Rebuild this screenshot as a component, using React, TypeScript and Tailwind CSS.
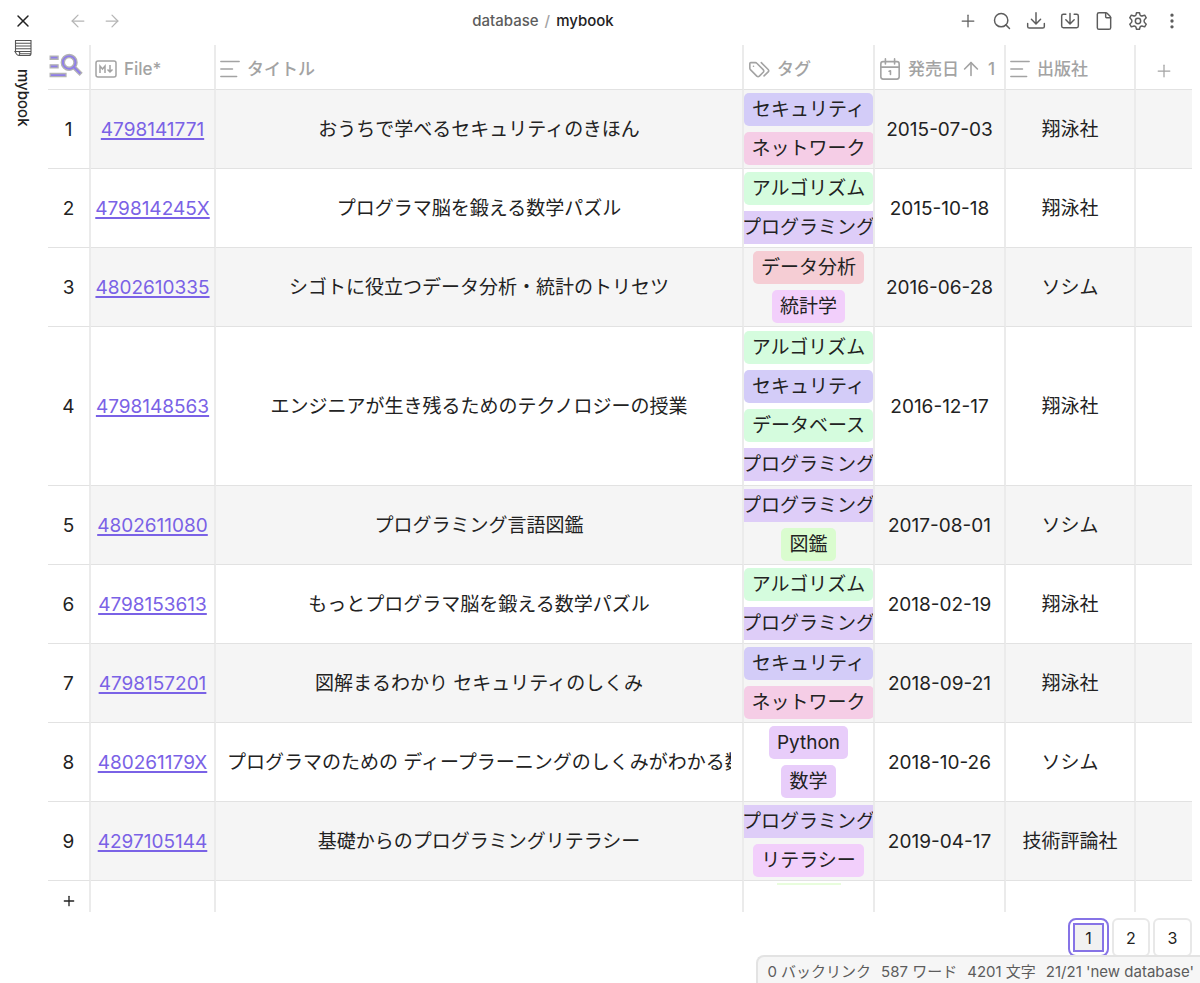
import * as React from "react";
import { ArrowLeft, ArrowRight, ArrowUp, EllipsisVertical, File, Plus, Search, X } from "lucide-react";

const tagColors: Record<string, string> = {
  セキュリティ: "bg-[#d3ccf8]",
  ネットワーク: "bg-[#f5cde6]",
  アルゴリズム: "bg-[#d5fcde]",
  プログラミング: "bg-[#decdf8]",
  データ分析: "bg-[#f5cdd4]",
  統計学: "bg-[#f2cffb]",
  データベース: "bg-[#d5fcde]",
  図鑑: "bg-[#dafccf]",
  Python: "bg-[#e8cdfa]",
  数学: "bg-[#e8cdfa]",
  リテラシー: "bg-[#f2cffb]",
};

const books = [
  { file: "4798141771", title: "おうちで学べるセキュリティのきほん", tags: ["セキュリティ", "ネットワーク"], date: "2015-07-03", publisher: "翔泳社" },
  { file: "479814245X", title: "プログラマ脳を鍛える数学パズル", tags: ["アルゴリズム", "プログラミング"], date: "2015-10-18", publisher: "翔泳社" },
  { file: "4802610335", title: "シゴトに役立つデータ分析・統計のトリセツ", tags: ["データ分析", "統計学"], date: "2016-06-28", publisher: "ソシム" },
  { file: "4798148563", title: "エンジニアが生き残るためのテクノロジーの授業", tags: ["アルゴリズム", "セキュリティ", "データベース", "プログラミング"], date: "2016-12-17", publisher: "翔泳社" },
  { file: "4802611080", title: "プログラミング言語図鑑", tags: ["プログラミング", "図鑑"], date: "2017-08-01", publisher: "ソシム" },
  { file: "4798153613", title: "もっとプログラマ脳を鍛える数学パズル", tags: ["アルゴリズム", "プログラミング"], date: "2018-02-19", publisher: "翔泳社" },
  { file: "4798157201", title: "図解まるわかり セキュリティのしくみ", tags: ["セキュリティ", "ネットワーク"], date: "2018-09-21", publisher: "翔泳社" },
  { file: "480261179X", title: "プログラマのための ディープラーニングのしくみがわかる数学入門", tags: ["Python", "数学"], date: "2018-10-26", publisher: "ソシム" },
  { file: "4297105144", title: "基礎からのプログラミングリテラシー", tags: ["プログラミング", "リテラシー"], date: "2019-04-17", publisher: "技術評論社" },
];

type IconProps = { children: React.ReactNode; className?: string };

function Icon({ children, className = "size-5" }: IconProps) {
  return (
    <svg
      viewBox="0 0 24 24"
      fill="none"
      stroke="currentColor"
      strokeWidth={1.75}
      strokeLinecap="round"
      strokeLinejoin="round"
      aria-hidden="true"
      className={`shrink-0 ${className}`}
    >
      {children}
    </svg>
  );
}

function DownloadIcon() {
  return (
    <Icon>
      <path d="M12 2v13M6.500 10 12 15.500 17.500 10M2 15v3.500a2 2 0 0 0 2 2h16a2 2 0 0 0 2-2V15" />
    </Icon>
  );
}

function ImportIcon() {
  return (
    <Icon>
      <path d="M12 3v12M7 10.500 12 15.500l5-5M7 4H4a2 2 0 0 0-2 2v12a2 2 0 0 0 2 2h16a2 2 0 0 0 2-2V6a2 2 0 0 0-2-2h-3" />
    </Icon>
  );
}

function GearIcon() {
  return (
    <Icon>
      <path d="M9.700 4.200 10.200 2h3.600l.500 2.200q.400 1.300 1.300 1.500.900.500 2.200 0l2.200-.700 1.900 3.200-1.700 1.600q-.900.900-.900 2.200t.900 2.200l1.700 1.600-1.900 3.200-2.200-.700q-1.300-.500-2.200 0-.900.300-1.300 1.500l-.500 2.200h-3.600l-.500-2.200q-.400-1.300-1.300-1.500-.900-.500-2.200 0L4 19l-1.900-3.200 1.700-1.600q.900-.900.900-2.200t-.900-2.200L2.100 8.200 4 5l2.200.700q1.300.500 2.200 0 .900-.200 1.300-1.500Z" />
      <circle cx="12" cy="12" r="3.200" />
    </Icon>
  );
}

function TextIcon() {
  return (
    <Icon>
      <path d="M1 3h22M1 12h14M1 21h19" />
    </Icon>
  );
}

function TagsIcon() {
  return (
    <Icon className="size-[22px]">
      <path d="M2 6v5.200q0 .900.600 1.500l7 7q1.400 1.200 2.800 0l4.200-4.200q1.200-1.400 0-2.800l-7-7Q9 5 8 5H3Q2 5 2 6Z" />
      <path d="m17.500 19.500 4.500-4.300q1.200-1.300 0-2.700L14.500 5M6 9h.010" />
    </Icon>
  );
}

function CalendarIcon() {
  return (
    <Icon className="size-[22px]">
      <rect x="2" y="4" width="20" height="19" rx="2.500" />
      <path d="M7 1v5.500M17 1v5.500M2 10h20M11 14.500l1.500-.500v4" />
    </Icon>
  );
}

function MarkdownIcon() {
  return (
    <svg viewBox="0 0 22 18" fill="none" stroke="currentColor" strokeWidth={1.5} className="h-[18px] w-[22px] shrink-0" aria-hidden="true">
      <rect x="1" y="1" width="20" height="16" rx="2" />
      <path d="M5 13V6l2.500 3L10 6v7M15 5v7M12.500 9.500 15 12l2.500-2.500" />
    </svg>
  );
}

function SearchRowsIcon() {
  return (
    <svg viewBox="0 0 24 24" className="size-[38px] shrink-0" fill="#8f7ee8" stroke="#b3b3b3" strokeWidth={0.8} aria-hidden="true">
      <path d="M7 9H2V7h5v2zm0 3.500H2v2h5v-2zm13.590 6.500-3.830-3.830c-.800.520-1.740.830-2.760.830-2.760 0-5-2.240-5-5s2.240-5 5-5 5 2.240 5 5c0 1.020-.310 1.960-.830 2.750L22 17.590 20.590 19zM17 11c0-1.650-1.350-3-3-3s-3 1.350-3 3 1.350 3 3 3 3-1.350 3-3zM2 20h10v-2H2v2z" />
    </svg>
  );
}

function NotebookIcon() {
  return (
    <svg viewBox="0 0 18 18" fill="none" stroke="#555" strokeWidth={1.1} className="size-[18px]" aria-hidden="true">
      <path d="M1 1.500h16v13q0 2-2 2H5q-1.500 0-2.500-1.500L1 12.500h4q1.500 1.500 0 4M1.500 4.250H17M1.500 7H17M1.500 9.750H17M5 12.500h12M6 14.700h11M1.500 1.500v11" />
    </svg>
  );
}

function Tag({ name }: { name: string }) {
  return (
    <span className={`flex h-[33px] shrink-0 items-center whitespace-nowrap rounded-[5px] px-2 ${tagColors[name]}`}>
      {name}
    </span>
  );
}

function HeaderCell({ icon, label, children }: { icon: React.ReactNode; label: string; children?: React.ReactNode }) {
  return (
    <th scope="col" className="border-b border-r-2 border-b-[#e2e2e2] border-r-[#ebebeb] p-0 font-medium">
      <div className="flex items-center gap-[7px] whitespace-nowrap pl-1 pt-1">
        {icon}
        <span>{label}</span>
        {children}
      </div>
    </th>
  );
}

function BookTable() {
  const cell = "border-b border-r-2 border-b-[#e2e2e2] border-r-[#ebebeb]";

  return (
    <table className="w-full table-fixed border-separate border-spacing-0 text-center text-[19px] leading-6">
      <colgroup>
        <col className="w-[43px]" />
        <col className="w-[125px]" />
        <col />
        <col className="w-[131px]" />
        <col className="w-[131px]" />
        <col className="w-[130px]" />
        <col className="w-[56px]" />
      </colgroup>
      <thead>
        <tr className="h-[45px] text-[17px] text-[#a3a3a3]">
          <th scope="col" className={`p-0 ${cell}`}>
            <button type="button" aria-label="Search rows" className="-ml-px flex pb-[6px]">
              <SearchRowsIcon />
            </button>
          </th>
          <HeaderCell icon={<MarkdownIcon />} label="File*" />
          <HeaderCell icon={<TextIcon />} label="タイトル" />
          <HeaderCell icon={<TagsIcon />} label="タグ" />
          <HeaderCell icon={<CalendarIcon />} label="発売日">
            <span className="-ml-[6px] flex items-center gap-[6px]">
              <ArrowUp className="size-[22px]" strokeWidth={1.75} />
              <span>1</span>
            </span>
          </HeaderCell>
          <HeaderCell icon={<TextIcon />} label="出版社" />
          <th scope="col" className="border-b border-[#e2e2e2] p-0">
            <button type="button" aria-label="Add column" className="mx-auto flex pt-2">
              <Plus className="size-5" strokeWidth={1.5} />
            </button>
          </th>
        </tr>
      </thead>
      <tbody>
        {books.map((book, i) => {
          const bg = i % 2 === 0 ? "bg-[#f5f5f5]" : "bg-white";
          return (
            <tr key={book.file} className={book.tags.length > 2 ? "h-[159px]" : "h-[79px]"}>
              <td className={`px-0 pb-0 pt-[2px] ${cell}`}>{i + 1}</td>
              <td className={`px-0 pb-0 pt-[2px] ${cell} ${bg}`}>
                <a href={`#${book.file}`} className="text-[#7a62e6] underline decoration-2 underline-offset-2">
                  {book.file}
                </a>
              </td>
              <td className={`px-[11px] pb-0 pt-[2px] ${cell} ${bg}`}>
                <div className="overflow-hidden whitespace-nowrap">{book.title}</div>
              </td>
              <td className={`px-0 py-[3px] ${cell} ${bg}`}>
                <div className="flex flex-col items-center gap-[6px] overflow-hidden">
                  {book.tags.map((tag) => (
                    <Tag key={tag} name={tag} />
                  ))}
                </div>
              </td>
              <td className={`px-0 pb-0 pt-[2px] ${cell} ${bg}`}>{book.date}</td>
              <td className={`px-0 pb-0 pt-[2px] ${cell} ${bg}`}>{book.publisher}</td>
              <td className={`border-b border-[#e2e2e2] p-0 ${bg}`} />
            </tr>
          );
        })}
      </tbody>
      <tfoot>
        <tr className="h-[31px]">
          <td className="border-r-2 border-[#ebebeb] p-0">
            <button type="button" aria-label="Add row" className="mx-auto flex pt-2">
              <Plus className="size-4" strokeWidth={2} />
            </button>
          </td>
          <td className="border-r-2 border-[#ebebeb] p-0" />
          <td className="border-r-2 border-[#ebebeb] p-0" />
          <td className="border-r-2 border-[#ebebeb] p-0 align-top">
            <div className="mx-auto mt-[2px] h-[2px] w-16 bg-[#e8fddc]" />
          </td>
          <td className="border-r-2 border-[#ebebeb] p-0" />
          <td className="border-r-2 border-[#ebebeb] p-0" />
          <td className="p-0" />
        </tr>
      </tfoot>
    </table>
  );
}

function Pagination() {
  return (
    <nav aria-label="Pages" className="flex justify-end gap-[3px] pt-[6px] text-base">
      <button
        type="button"
        aria-current="page"
        className="h-[39px] w-[41px] rounded-lg border-2 border-[#8673e6] p-[3px]"
      >
        <span className="flex size-full items-center justify-center border-2 border-[#8673e6] bg-[#f1f1f1]">1</span>
      </button>
      <button type="button" className="h-[39px] w-[38px] rounded-md border-2 border-[#e8e8e8]">
        2
      </button>
      <button type="button" className="h-[39px] w-[39px] rounded-md border-2 border-[#e8e8e8]">
        3
      </button>
    </nav>
  );
}

function Toolbar() {
  return (
    <header className="mb-[3px] flex h-[42px] items-center">
      <div className="flex gap-[14px] pl-5 text-[#b5b5b5]">
        <button type="button" aria-label="Back">
          <ArrowLeft className="size-5" strokeWidth={1.5} />
        </button>
        <button type="button" aria-label="Forward">
          <ArrowRight className="size-5" strokeWidth={1.5} />
        </button>
      </div>
      <div className="flex flex-1 justify-center gap-[6px] pl-[6px] text-[15px] font-medium">
        <a href="#database" className="text-[#5c5c5c]">
          database
        </a>
        <span className="text-[#a3a3a3]">/</span>
        <span>mybook</span>
      </div>
      <div className="flex justify-end gap-[14px] pr-[10px] text-[#5c5c5c]">
        <button type="button" aria-label="Add">
          <Plus className="size-5" strokeWidth={1.5} />
        </button>
        <button type="button" aria-label="Search">
          <Search className="size-5" strokeWidth={1.75} />
        </button>
        <button type="button" aria-label="Download">
          <DownloadIcon />
        </button>
        <button type="button" aria-label="Import">
          <ImportIcon />
        </button>
        <button type="button" aria-label="Open as file">
          <File className="size-5" strokeWidth={1.75} />
        </button>
        <button type="button" aria-label="Settings">
          <GearIcon />
        </button>
        <button type="button" aria-label="More options">
          <EllipsisVertical className="size-5" strokeWidth={2} />
        </button>
      </div>
    </header>
  );
}

export default function App() {
  return (
    <div className="flex min-h-screen overflow-hidden bg-white font-['Inter','Noto_Sans_CJK_JP',sans-serif] text-[#222]">
      <aside className="flex w-12 shrink-0 flex-col items-center pr-[2px] pt-[11px]">
        <button type="button" aria-label="Close">
          <X className="size-5" strokeWidth={1.75} />
        </button>
        <div className="mt-[8px] flex flex-col items-center gap-3">
          <NotebookIcon />
          <span className="text-[15px] font-medium leading-5 [writing-mode:vertical-rl]">mybook</span>
        </div>
      </aside>

      <main className="min-w-0 flex-1 pr-2">
        <Toolbar />
        <BookTable />
        <Pagination />
      </main>

      <footer className="fixed bottom-0 right-0 flex h-7 items-center gap-[10px] whitespace-nowrap rounded-tl-lg border-l-2 border-t-2 border-[#e3e3e3] bg-[#f6f6f6] pl-[9px] pr-[6px] pt-1 text-[15px] text-[#5c5c5c]">
        <span>0 バックリンク</span>
        <span>587 ワード</span>
        <span>4201 文字</span>
        <span>21/21 'new database'</span>
      </footer>
    </div>
  );
}
